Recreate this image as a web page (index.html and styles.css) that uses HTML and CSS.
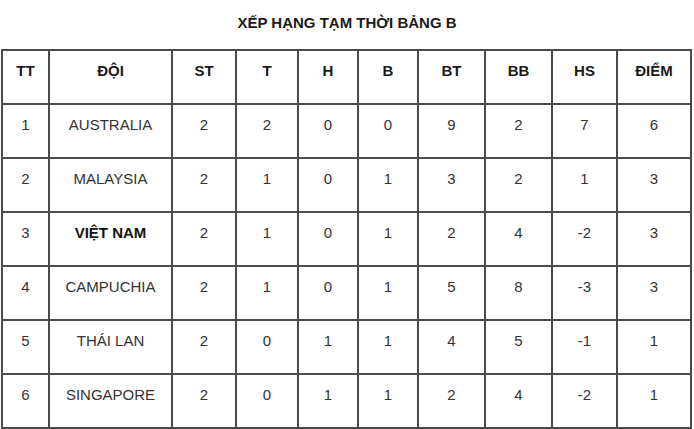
FILE: index.html
```html
<!DOCTYPE html>
<html lang="vi">
<head>
<meta charset="utf-8">
<link rel="stylesheet" href="styles.css">
</head>
<body>
<h1 class="title">XẾP HẠNG TẠM THỜI BẢNG B</h1>
<table class="standings">
<colgroup>
<col class="c-tt"><col class="c-team"><col class="c-st"><col class="c-t"><col class="c-h"><col class="c-b"><col class="c-bt"><col class="c-bb"><col class="c-hs"><col class="c-pts">
</colgroup>
<thead>
<tr><th>TT</th><th>ĐỘI</th><th>ST</th><th>T</th><th>H</th><th>B</th><th>BT</th><th>BB</th><th>HS</th><th>ĐIỂM</th></tr>
</thead>
<tbody>
<tr><td>1</td><td>AUSTRALIA</td><td>2</td><td>2</td><td>0</td><td>0</td><td>9</td><td>2</td><td>7</td><td>6</td></tr>
<tr><td>2</td><td>MALAYSIA</td><td>2</td><td>1</td><td>0</td><td>1</td><td>3</td><td>2</td><td>1</td><td>3</td></tr>
<tr><td>3</td><td class="strong">VIỆT NAM</td><td>2</td><td>1</td><td>0</td><td>1</td><td>2</td><td>4</td><td>-2</td><td>3</td></tr>
<tr><td>4</td><td>CAMPUCHIA</td><td>2</td><td>1</td><td>0</td><td>1</td><td>5</td><td>8</td><td>-3</td><td>3</td></tr>
<tr><td>5</td><td>THÁI LAN</td><td>2</td><td>0</td><td>1</td><td>1</td><td>4</td><td>5</td><td>-1</td><td>1</td></tr>
<tr><td>6</td><td>SINGAPORE</td><td>2</td><td>0</td><td>1</td><td>1</td><td>2</td><td>4</td><td>-2</td><td>1</td></tr>
</tbody>
</table>
</body>
</html>
```
FILE: styles.css
```css
html, body {
  margin: 0;
  padding: 0;
  background: #ffffff;
}
body {
  font-family: "Liberation Sans", Arial, sans-serif;
  color: #333333;
}
.title {
  margin: 0;
  height: 49px;
  padding-top: 14px;
  box-sizing: border-box;
  font-size: 15px;
  line-height: 18px;
  font-weight: bold;
  text-align: center;
  color: #1a1a1a;
}
.standings {
  border-collapse: collapse;
  table-layout: fixed;
  margin-left: 1px;
  width: 691px;
}
.standings th,
.standings td {
  border: 2px solid #4a4a4a;
  height: 54px;
  box-sizing: border-box;
  padding: 11px 2px 0;
  vertical-align: top;
  text-align: center;
  font-size: 15px;
  line-height: 18px;
}
.standings th {
  font-weight: bold;
  color: #1a1a1a;
}
.standings td.strong {
  font-weight: bold;
  color: #111111;
}
.c-tt { width: 47px; }
.c-team { width: 123px; }
.c-st { width: 64px; }
.c-t { width: 62px; }
.c-h { width: 60px; }
.c-b { width: 60px; }
.c-bt { width: 67px; }
.c-bb { width: 67px; }
.c-hs { width: 65px; }
.c-pts { width: 74px; }
```
